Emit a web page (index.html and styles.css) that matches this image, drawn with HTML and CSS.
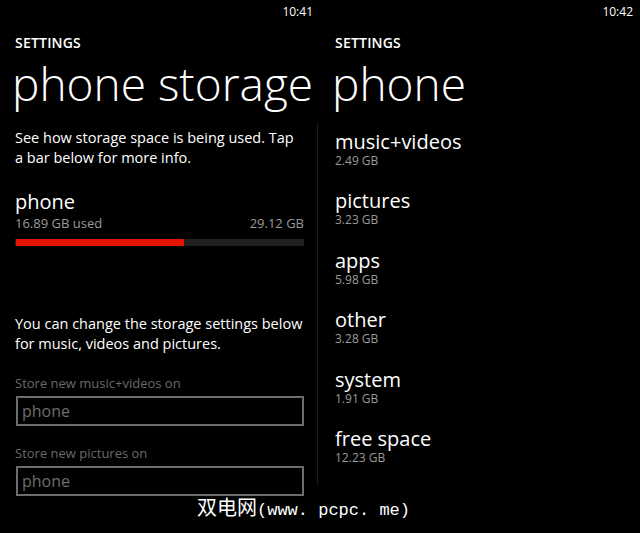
FILE: index.html
```html
<!DOCTYPE html>
<html>
<head>
<meta charset="utf-8">
<link rel="stylesheet" href="styles.css">
</head>
<body>
<div class="screen">
  <section class="panel panel-left">
    <div class="status">10:41</div>
    <div class="app-name">SETTINGS</div>
    <h1 class="page-title">phone storage</h1>
    <div class="content divided">
      <p class="desc">See how storage space is being used. Tap a bar below for more info.</p>
      <div class="storage">
        <div class="storage-name">phone</div>
        <div class="storage-meta"><span>16.89 GB used</span><span>29.12 GB</span></div>
        <div class="bar"><div class="bar-fill" style="width:58%"></div></div>
      </div>
      <p class="desc desc-2">You can change the storage settings below for music, videos and pictures.</p>
      <div class="field">
        <div class="field-label">Store new music+videos on</div>
        <div class="picker">phone</div>
      </div>
      <div class="field">
        <div class="field-label">Store new pictures on</div>
        <div class="picker">phone</div>
      </div>
    </div>
  </section>
  <section class="panel panel-right">
    <div class="status">10:42</div>
    <div class="app-name">SETTINGS</div>
    <h1 class="page-title">phone</h1>
    <ul class="list">
      <li><div class="item-title">music+videos</div><div class="item-sub">2.49 GB</div></li>
      <li><div class="item-title">pictures</div><div class="item-sub">3.23 GB</div></li>
      <li><div class="item-title">apps</div><div class="item-sub">5.98 GB</div></li>
      <li><div class="item-title">other</div><div class="item-sub">3.28 GB</div></li>
      <li><div class="item-title">system</div><div class="item-sub">1.91 GB</div></li>
      <li><div class="item-title">free space</div><div class="item-sub">12.23 GB</div></li>
    </ul>
  </section>
  <div class="watermark"><span class="wm-cjk">双电网</span><span class="wm-latin">(www. pcpc. me)</span></div>
</div>
</body>
</html>
```

FILE: styles.css
```css
html, body {
  margin: 0;
  padding: 0;
  background: #000;
}
body {
  width: 640px;
  height: 533px;
  overflow: hidden;
  color: #fff;
  font-family: "Open Sans", "Noto Sans", sans-serif;
}
.screen {
  position: relative;
  display: flex;
  width: 640px;
  height: 533px;
}
.panel {
  width: 320px;
  flex: none;
  display: flex;
  flex-direction: column;
}
.status {
  height: 24px;
  line-height: 24px;
  font-size: 12px;
  text-align: right;
  padding-right: 7px;
  color: #fff;
}
.app-name {
  margin-top: 9px;
  padding-left: 15px;
  font-size: 14px;
  font-weight: 600;
  line-height: 20px;
  letter-spacing: 0.2px;
}
.page-title {
  margin: 0;
  padding-left: 12px;
  font-size: 46px;
  font-weight: 300;
  line-height: 60px;
  letter-spacing: 0;
}
.content {
  margin-top: 10px;
  padding-left: 15px;
}
.divided {
  margin-right: 2px;
  padding-right: 13px;
  border-right: 1px solid #1c1c1c;
  height: 362px;
}
.desc {
  margin: 0;
  padding-top: 5px;
  font-size: 14.5px;
  line-height: 20px;
}
.storage {
  margin-top: 21px;
}
.storage-name {
  font-size: 20px;
  line-height: 26px;
}
.storage-meta {
  display: flex;
  justify-content: space-between;
  font-size: 13px;
  line-height: 16px;
  color: #9a9a9a;
}
.bar {
  margin-top: 8px;
  height: 7px;
  background: #1f1f1f;
}
.bar-fill {
  height: 100%;
  background: #e51400;
  margin-left: 1px;
}
.desc-2 {
  margin-top: 63px;
}
.field {
  margin-top: 20px;
}
.field + .field {
  margin-top: 18px;
}
.field-label {
  font-size: 13px;
  line-height: 18px;
  color: #6a6a6a;
}
.picker {
  margin-top: 4px;
  margin-left: 1px;
  height: 26px;
  border: 2px solid #6d6d6d;
  padding-left: 4px;
  font-size: 16px;
  line-height: 26px;
  color: #6d6d6d;
}
.list {
  list-style: none;
  margin: 17px 0 0;
  padding: 0 0 0 15px;
}
.list li {
  height: 59.4px;
}
.item-title {
  font-size: 20px;
  line-height: 24px;
}
.item-sub {
  font-size: 12px;
  line-height: 14px;
  color: #9a9a9a;
}
.watermark {
  position: absolute;
  left: 197px;
  top: 495px;
  white-space: nowrap;
  color: #fff;
  line-height: 24px;
}
.wm-cjk {
  font-family: "Noto Sans CJK SC", sans-serif;
  font-size: 20px;
}
.wm-latin {
  font-family: "Liberation Mono", "Noto Sans CJK SC", monospace;
  font-size: 17px;
}
```
